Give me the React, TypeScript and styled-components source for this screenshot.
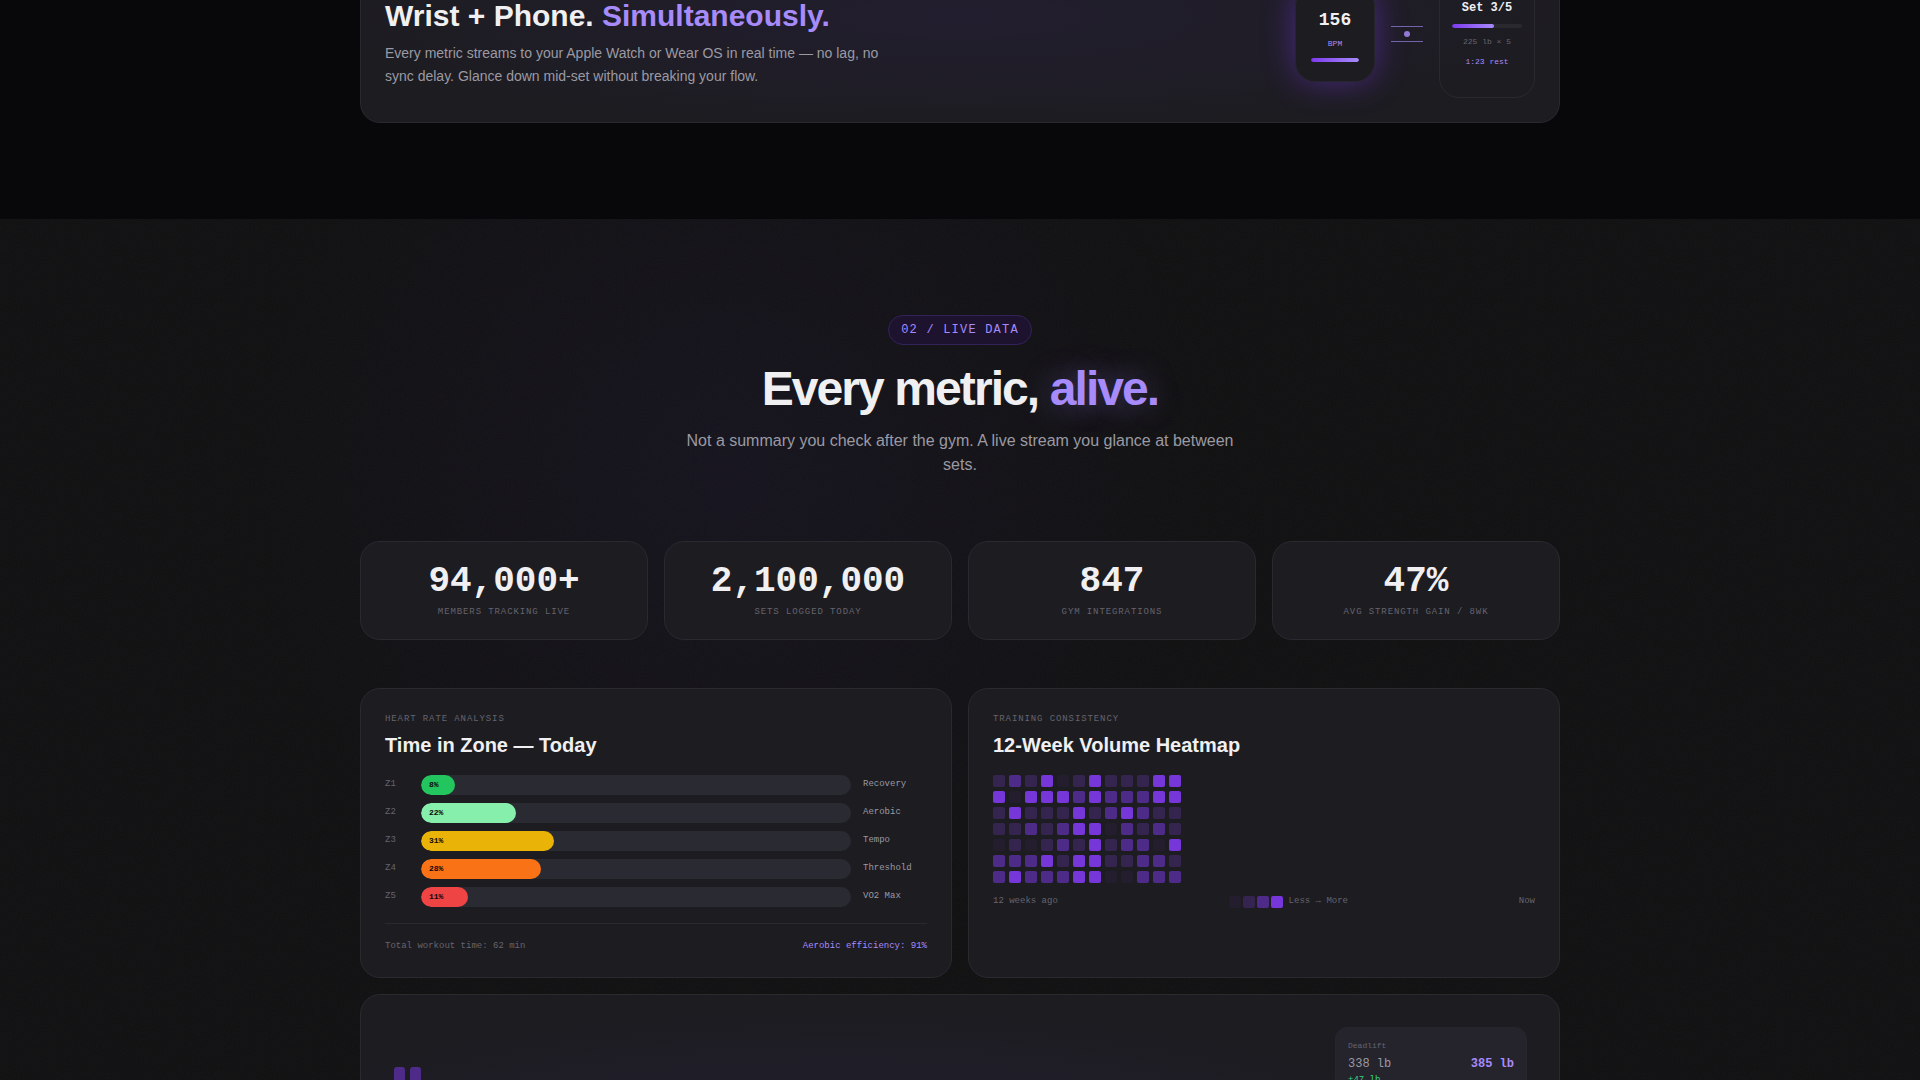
import React from "react";
import styled, { createGlobalStyle } from "styled-components";

const sans = `"Liberation Sans", Arial, sans-serif`;
const mono = `"Liberation Mono", "Courier New", monospace`;

const GlobalStyle = createGlobalStyle`
  *, *::before, *::after { box-sizing: border-box; }
  html { background: #111113; }
  body {
    margin: 0;
    background: #08080a;
    color: #f0f0f2;
    font-family: ${sans};
    line-height: 1.5;
    overflow-x: hidden;
  }
  h2, h3, p, dl, dd, dt, ul { margin: 0; padding: 0; }
`;

const Page = styled.main`
  margin-top: -55px;
  height: calc(100vh + 55px);
  overflow: hidden;
`;

const Container = styled.div`
  max-width: 1200px;
  margin: 0 auto;
  display: grid;
  gap: 16px;
`;

const FeatureSection = styled.section`
  background: #08080a;
  padding-bottom: 96px;
`;

const Card = styled.article`
  background: #1d1c21;
  border: 1px solid #2a2930;
  border-radius: 20px;
  padding: 24px;
`;

const SyncCard = styled(Card)`
  display: flex;
  align-items: center;
  justify-content: space-between;
  gap: 48px;
  background: radial-gradient(ellipse at 50% 40%, #221e2f, #1d1c21 75%);
`;

const SyncCopy = styled.div`
  padding-top: 18px;
  max-width: 500px;
`;

const SyncTitle = styled.h2`
  font-size: 30px;
  line-height: 36px;
  font-weight: 700;
  white-space: nowrap;
`;

const Accent = styled.span<{ $glow?: boolean }>`
  color: #a78bfa;
  text-shadow: ${(p) => (p.$glow ? "0 0 32px rgba(167, 139, 250, 0.4)" : "none")};
`;

const SyncText = styled.p`
  margin-top: 8px;
  font-size: 14px;
  line-height: 23px;
  color: #9b9aa3;
`;

const Devices = styled.div`
  display: flex;
  align-items: center;
  gap: 16px;
`;

const Device = styled.div`
  display: flex;
  flex-direction: column;
  align-items: center;
  justify-content: flex-end;
  font-family: ${mono};
  border: 1px solid #2a2930;
  background: #1d1c21;
`;

const Watch = styled(Device)`
  width: 80px;
  height: 96px;
  border-radius: 20px;
  border-color: #26242c;
  padding-bottom: 19px;
  box-shadow: 0 0 32px rgba(124, 58, 237, 0.45);
`;

const Phone = styled(Device)`
  width: 96px;
  height: 128px;
  border-radius: 20px;
  background: none;
  padding: 0 12px 29px;
`;

const Bpm = styled.strong`
  font-size: 18px;
  line-height: 20px;
`;

const DeviceNote = styled.span<{ $accent?: boolean }>`
  font-size: 8px;
  line-height: 12px;
  margin-top: 8px;
  color: ${(p) => (p.$accent ? "#a78bfa" : "#65646e")};
`;

const SetCount = styled.strong`
  font-size: 12px;
  line-height: 16px;
`;

const Meter = styled.div<{ $width: string }>`
  width: ${(p) => p.$width};
  height: 4px;
  margin-top: 8px;
  border-radius: 2px;
  background: #2a2930;
  overflow: hidden;
`;

const MeterFill = styled.div<{ $value: number }>`
  width: ${(p) => p.$value}%;
  height: 100%;
  border-radius: 2px;
  background: linear-gradient(90deg, #7c3aed, #a78bfa);
`;

const Link = styled.div`
  width: 32px;
  display: flex;
  flex-direction: column;
  align-items: center;
  gap: 4px;
`;

const LinkLine = styled.span`
  width: 100%;
  height: 1px;
  background: #7363aa;
`;

const LinkDot = styled.span`
  width: 6px;
  height: 6px;
  border-radius: 50%;
  background: #9179d6;
`;

const grain = `url("data:image/svg+xml,%3Csvg xmlns='http://www.w3.org/2000/svg' width='256' height='256'%3E%3Cfilter id='n'%3E%3CfeTurbulence type='fractalNoise' baseFrequency='0.9' numOctaves='4' stitchTiles='stitch'/%3E%3C/filter%3E%3Crect width='256' height='256' filter='url(%23n)' opacity='0.04'/%3E%3C/svg%3E")`;

const DataSection = styled.section`
  background:
    ${grain},
    radial-gradient(circle 480px at 38% 260px, rgba(108, 70, 237, 0.06), transparent),
    #0f0f10;
  padding: 96px 0;
`;

const SectionHead = styled.header`
  display: flex;
  flex-direction: column;
  align-items: center;
  text-align: center;
  margin-bottom: 64px;
`;

const Badge = styled.span`
  font-family: ${mono};
  font-size: 12px;
  line-height: 18px;
  letter-spacing: 0.1em;
  color: #a78bfa;
  background: #1e132f;
  border: 1px solid #33225a;
  border-radius: 16px;
  padding: 5px 12px;
`;

const Headline = styled.h2`
  margin-top: 16px;
  font-size: 48px;
  line-height: 56px;
  letter-spacing: -0.04em;
  font-weight: 700;
`;

const Lead = styled.p`
  margin-top: 12px;
  max-width: 560px;
  font-size: 16px;
  line-height: 24px;
  color: #9b9aa3;
`;

const StatGrid = styled.dl`
  display: grid;
  grid-template-columns: repeat(4, 1fr);
  gap: 16px;
  margin-bottom: 32px;
`;

const Stat = styled.div`
  display: flex;
  flex-direction: column-reverse;
  align-items: center;
  background: #1d1c21;
  border: 1px solid #2a2930;
  border-radius: 20px;
  padding: 22px 24px 20px;
`;

const StatValue = styled.dd`
  font-family: ${mono};
  font-size: 36px;
  line-height: 36px;
  font-weight: 700;
`;

const StatLabel = styled.dt`
  margin-top: 6px;
  font-family: ${mono};
  font-size: 9px;
  line-height: 13px;
  letter-spacing: 0.1em;
  text-transform: uppercase;
  color: #65646e;
`;

const PanelGrid = styled.div`
  display: grid;
  grid-template-columns: 1fr 1fr;
  gap: 16px;
`;

const Eyebrow = styled.p`
  font-family: ${mono};
  font-size: 9px;
  line-height: 12px;
  letter-spacing: 0.1em;
  text-transform: uppercase;
  color: #65646e;
`;

const PanelTitle = styled.h3`
  margin: 4px 0 14px;
  font-size: 20px;
  line-height: 32px;
  font-weight: 700;
`;

const Zones = styled.ul`
  list-style: none;
  display: grid;
  gap: 8px;
`;

const Zone = styled.li`
  display: grid;
  grid-template-columns: 24px 1fr 64px;
  gap: 12px;
  font-family: ${mono};
  font-size: 9px;
  line-height: 18px;
  color: #9b9aa3;
`;

const ZoneCode = styled.span`
  color: #65646e;
`;

const Track = styled.div`
  height: 20px;
  border-radius: 10px;
  background: #2a2a32;
  overflow: hidden;
`;

const Fill = styled.div<{ $value: number; $color: string }>`
  width: ${(p) => p.$value}%;
  height: 100%;
  padding-left: 8px;
  border-radius: 10px;
  background: ${(p) => p.$color};
  color: #0a0a0c;
  font-size: 8px;
  line-height: 20px;
  font-weight: 700;
`;

const ZoneFooter = styled.footer`
  display: flex;
  justify-content: space-between;
  margin-top: 16px;
  padding-top: 15px;
  border-top: 1px solid #2a2930;
  font-family: ${mono};
  font-size: 9px;
  line-height: 14px;
  color: #65646e;
`;

const Heatmap = styled.div`
  display: grid;
  grid-template-columns: repeat(12, 12px);
  gap: 4px;
`;

const levels = ["#231d2d", "#352450", "#4f2b89", "#7636da"];

const Cell = styled.span<{ $level: number }>`
  width: 12px;
  height: 12px;
  border-radius: 2px;
  background: ${(p) => levels[p.$level]};
`;

const HeatFooter = styled.footer`
  display: flex;
  justify-content: space-between;
  margin-top: 12px;
  font-family: ${mono};
  font-size: 9px;
  line-height: 12px;
  color: #65646e;
`;

const Legend = styled.span`
  display: flex;
  gap: 2px;
  ${Cell} {
    margin-top: 1px;
  }
`;

const LegendText = styled.span`
  margin-left: 4px;
`;

const StrengthCard = styled(Card)`
  display: flex;
  justify-content: space-between;
  align-items: flex-start;
  padding: 32px;
  height: 320px;
  background: radial-gradient(ellipse at 40% 60%, #231f33, #1d1c21 65%);
`;

const Bars = styled.div`
  display: flex;
  gap: 5px;
  padding: 40px 1px 0;
`;

const Bar = styled.span`
  width: 11px;
  height: 180px;
  border-radius: 3px 3px 0 0;
  background: #4f2b89;
`;

const Lift = styled.div`
  width: 192px;
  padding: 12px;
  border: 1px solid #27262f;
  border-radius: 12px;
  background: #25242d;
  font-family: ${mono};
`;

const LiftName = styled.p`
  font-size: 8px;
  line-height: 12px;
  color: #65646e;
`;

const LiftRow = styled.p`
  display: flex;
  justify-content: space-between;
  margin-top: 3px;
  font-size: 12px;
  line-height: 18px;
  color: #9b9aa3;

  strong {
    color: #a78bfa;
  }
`;

const LiftGain = styled.p`
  margin-top: 1px;
  font-size: 9px;
  line-height: 13px;
  color: #34d37a;
`;

const stats = [
  ["94,000+", "Members tracking live"],
  ["2,100,000", "Sets logged today"],
  ["847", "Gym integrations"],
  ["47%", "Avg strength gain / 8wk"],
];

const zones = [
  { code: "Z1", value: 8, color: "#22c55e", name: "Recovery" },
  { code: "Z2", value: 22, color: "#86efac", name: "Aerobic" },
  { code: "Z3", value: 31, color: "#eab308", name: "Tempo" },
  { code: "Z4", value: 28, color: "#f97316", name: "Threshold" },
  { code: "Z5", value: 11, color: "#ef4444", name: "VO2 Max" },
];

const volume = [
  "121301311133",
  "303332322233",
  "131113123211",
  "112123302121",
  "010121312203",
  "222313311221",
  "232223300222",
];

export default function App() {
  return (
    <>
      <GlobalStyle />
      <Page>
        <FeatureSection>
          <Container>
            <SyncCard>
              <SyncCopy>
                <SyncTitle>
                  Wrist + Phone. <Accent>Simultaneously.</Accent>
                </SyncTitle>
                <SyncText>
                  Every metric streams to your Apple Watch or Wear OS in real time — no lag, no
                  sync delay. Glance down mid-set without breaking your flow.
                </SyncText>
              </SyncCopy>
              <Devices>
                <Watch>
                  <Bpm>156</Bpm>
                  <DeviceNote $accent>BPM</DeviceNote>
                  <Meter $width="48px">
                    <MeterFill $value={100} />
                  </Meter>
                </Watch>
                <Link>
                  <LinkLine />
                  <LinkDot />
                  <LinkLine />
                </Link>
                <Phone>
                  <SetCount>Set 3/5</SetCount>
                  <Meter $width="100%">
                    <MeterFill $value={60} />
                  </Meter>
                  <DeviceNote>225 lb × 5</DeviceNote>
                  <DeviceNote $accent>1:23 rest</DeviceNote>
                </Phone>
              </Devices>
            </SyncCard>
          </Container>
        </FeatureSection>

        <DataSection>
          <SectionHead>
            <Badge>02 / LIVE DATA</Badge>
            <Headline>
              Every metric, <Accent $glow>alive.</Accent>
            </Headline>
            <Lead>
              Not a summary you check after the gym. A live stream you glance at between sets.
            </Lead>
          </SectionHead>

          <Container>
            <StatGrid>
              {stats.map(([value, label]) => (
                <Stat key={label}>
                  <StatLabel>{label}</StatLabel>
                  <StatValue>{value}</StatValue>
                </Stat>
              ))}
            </StatGrid>

            <PanelGrid>
              <Card>
                <Eyebrow>Heart rate analysis</Eyebrow>
                <PanelTitle>Time in Zone — Today</PanelTitle>
                <Zones>
                  {zones.map((z) => (
                    <Zone key={z.code}>
                      <ZoneCode>{z.code}</ZoneCode>
                      <Track>
                        <Fill $value={z.value} $color={z.color}>
                          {z.value}%
                        </Fill>
                      </Track>
                      <span>{z.name}</span>
                    </Zone>
                  ))}
                </Zones>
                <ZoneFooter>
                  <span>Total workout time: 62 min</span>
                  <Accent>Aerobic efficiency: 91%</Accent>
                </ZoneFooter>
              </Card>

              <Card>
                <Eyebrow>Training consistency</Eyebrow>
                <PanelTitle>12-Week Volume Heatmap</PanelTitle>
                <Heatmap>
                  {volume
                    .join("")
                    .split("")
                    .map((level, i) => (
                      <Cell key={i} $level={Number(level)} />
                    ))}
                </Heatmap>
                <HeatFooter>
                  <span>12 weeks ago</span>
                  <Legend>
                    {levels.map((_, i) => (
                      <Cell key={i} $level={i} />
                    ))}
                    <LegendText>Less → More</LegendText>
                  </Legend>
                  <span>Now</span>
                </HeatFooter>
              </Card>
            </PanelGrid>

            <StrengthCard>
              <Bars>
                <Bar />
                <Bar />
              </Bars>
              <Lift>
                <LiftName>Deadlift</LiftName>
                <LiftRow>
                  <span>338 lb</span>
                  <strong>385 lb</strong>
                </LiftRow>
                <LiftGain>+47 lb</LiftGain>
              </Lift>
            </StrengthCard>
          </Container>
        </DataSection>
      </Page>
    </>
  );
}
